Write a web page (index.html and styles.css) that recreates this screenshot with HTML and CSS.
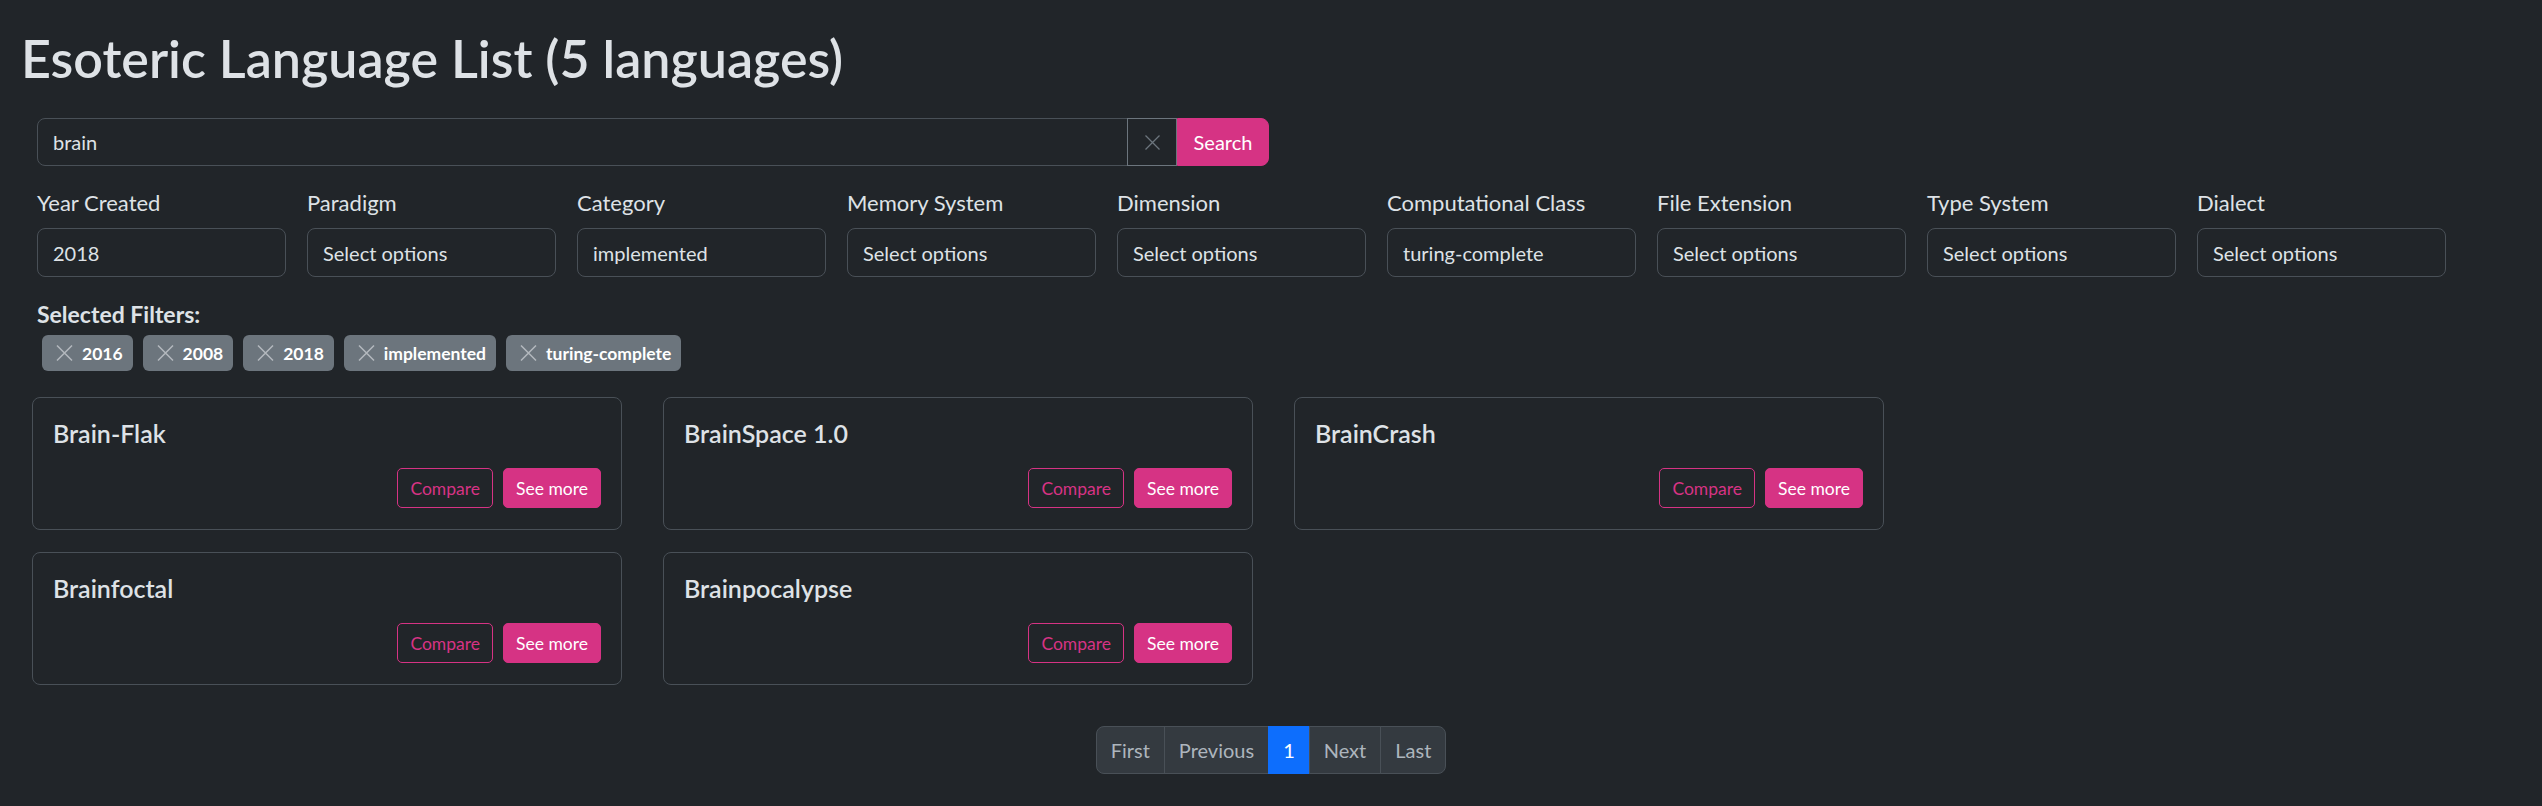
FILE: index.html
```html
<!DOCTYPE html>
<html lang="en">
<head>
<meta charset="utf-8">
<title>Esoteric Language List</title>
<link rel="stylesheet" href="styles.css">
</head>
<body>
<main class="page">
  <h1 class="title">Esoteric Language List (5 languages)</h1>

  <section class="controls">
    <form class="search">
      <input class="search-input" type="text" value="brain">
      <button class="clear-btn" type="button" aria-label="Clear">
        <svg width="15" height="15" viewBox="0 0 15 15"><path d="M0.5 0.5 L14.5 14.5 M14.5 0.5 L0.5 14.5" stroke="#6c757d" stroke-width="1.3" fill="none"/></svg>
      </button>
      <button class="search-btn" type="button">Search</button>
    </form>

    <div class="filters">
      <div class="filter"><label class="filter-label">Year Created</label><div class="select">2018</div></div>
      <div class="filter"><label class="filter-label">Paradigm</label><div class="select">Select options</div></div>
      <div class="filter"><label class="filter-label">Category</label><div class="select">implemented</div></div>
      <div class="filter"><label class="filter-label">Memory System</label><div class="select">Select options</div></div>
      <div class="filter"><label class="filter-label">Dimension</label><div class="select">Select options</div></div>
      <div class="filter"><label class="filter-label">Computational Class</label><div class="select">turing-complete</div></div>
      <div class="filter"><label class="filter-label">File Extension</label><div class="select">Select options</div></div>
      <div class="filter"><label class="filter-label">Type System</label><div class="select">Select options</div></div>
      <div class="filter"><label class="filter-label">Dialect</label><div class="select">Select options</div></div>
    </div>

    <div class="selected">
      <div class="selected-label">Selected Filters:</div>
      <div class="badges">
        <span class="badge"><svg class="badge-x" width="17" height="16" viewBox="0 0 17 16"><path d="M1 0.5 L16 15.5 M16 0.5 L1 15.5" stroke="#b3b8bd" stroke-width="1.5" fill="none"/></svg>2016</span>
        <span class="badge"><svg class="badge-x" width="17" height="16" viewBox="0 0 17 16"><path d="M1 0.5 L16 15.5 M16 0.5 L1 15.5" stroke="#b3b8bd" stroke-width="1.5" fill="none"/></svg>2008</span>
        <span class="badge"><svg class="badge-x" width="17" height="16" viewBox="0 0 17 16"><path d="M1 0.5 L16 15.5 M16 0.5 L1 15.5" stroke="#b3b8bd" stroke-width="1.5" fill="none"/></svg>2018</span>
        <span class="badge"><svg class="badge-x" width="17" height="16" viewBox="0 0 17 16"><path d="M1 0.5 L16 15.5 M16 0.5 L1 15.5" stroke="#b3b8bd" stroke-width="1.5" fill="none"/></svg>implemented</span>
        <span class="badge"><svg class="badge-x" width="17" height="16" viewBox="0 0 17 16"><path d="M1 0.5 L16 15.5 M16 0.5 L1 15.5" stroke="#b3b8bd" stroke-width="1.5" fill="none"/></svg>turing-complete</span>
      </div>
    </div>
  </section>

  <section class="cards">
    <article class="card">
      <h5 class="card-title">Brain-Flak</h5>
      <div class="card-actions"><button class="btn-compare" type="button">Compare</button><button class="btn-more" type="button">See more</button></div>
    </article>
    <article class="card">
      <h5 class="card-title">BrainSpace 1.0</h5>
      <div class="card-actions"><button class="btn-compare" type="button">Compare</button><button class="btn-more" type="button">See more</button></div>
    </article>
    <article class="card">
      <h5 class="card-title">BrainCrash</h5>
      <div class="card-actions"><button class="btn-compare" type="button">Compare</button><button class="btn-more" type="button">See more</button></div>
    </article>
    <article class="card">
      <h5 class="card-title">Brainfoctal</h5>
      <div class="card-actions"><button class="btn-compare" type="button">Compare</button><button class="btn-more" type="button">See more</button></div>
    </article>
    <article class="card">
      <h5 class="card-title">Brainpocalypse</h5>
      <div class="card-actions"><button class="btn-compare" type="button">Compare</button><button class="btn-more" type="button">See more</button></div>
    </article>
  </section>

  <nav class="pager">
    <span class="page-item first-item">First</span>
    <span class="page-item">Previous</span>
    <span class="page-item active">1</span>
    <span class="page-item">Next</span>
    <span class="page-item last-item">Last</span>
  </nav>
</main>
</body>
</html>
```

FILE: styles.css
```css
html {
  background: #212529;
}

body {
  margin: 0;
  background: #212529;
  color: #dee2e6;
  font-family: Lato, "Noto Sans", sans-serif;
  font-size: 20px;
  line-height: 1.5;
}

.page {
  padding: 27px 21px 20px;
}

.title {
  margin: 0 0 29px;
  font-size: 52px;
  font-weight: 600;
  line-height: 1.2;
  color: #dee2e6;
}

.controls {
  padding-left: 16px;
}

.search {
  display: flex;
  width: 1232px;
  height: 48px;
  margin: 0;
}

.search-input {
  flex: 1;
  min-width: 0;
  box-sizing: border-box;
  height: 48px;
  margin: 0;
  padding: 0 15px;
  background: #212529;
  color: #dee2e6;
  border: 1px solid #495057;
  border-radius: 8px 0 0 8px;
  font: inherit;
  outline: none;
}

.clear-btn {
  width: 50px;
  height: 48px;
  margin: 0 0 0 -1px;
  padding: 0;
  display: flex;
  align-items: center;
  justify-content: center;
  background: transparent;
  border: 1px solid #6c757d;
  border-radius: 0;
}

.search-btn {
  width: 92px;
  height: 48px;
  margin: 0;
  padding: 0;
  background: #d63384;
  color: #fff;
  border: 1px solid #d63384;
  border-radius: 0 8px 8px 0;
  font: inherit;
}

.filters {
  display: flex;
  gap: 21px;
  margin-top: 22px;
}

.filter {
  width: 249px;
}

.filter-label {
  display: block;
  margin-bottom: 10px;
  font-size: 22px;
  line-height: 30px;
}

.select {
  box-sizing: border-box;
  height: 49px;
  padding: 0 15px;
  display: flex;
  align-items: center;
  border: 1px solid #495057;
  border-radius: 8px;
  color: #dee2e6;
}

.selected {
  margin-top: 22px;
}

.selected-label {
  font-size: 23px;
  font-weight: 700;
  line-height: 30px;
}

.badges {
  display: flex;
  gap: 10px;
  margin: 6px 0 0 5px;
}

.badge {
  display: inline-flex;
  align-items: center;
  height: 36px;
  padding: 0 10px 0 14px;
  background: #6c757d;
  color: #fff;
  border-radius: 6px;
  font-size: 17.5px;
  font-weight: 700;
  line-height: 1;
}

.badge-x {
  margin-right: 9px;
}

.cards {
  display: grid;
  grid-template-columns: repeat(3, 590px);
  column-gap: 41px;
  row-gap: 22px;
  margin: 26px 0 0 11px;
}

.card {
  box-sizing: border-box;
  height: 133px;
  padding: 20px;
  border: 1px solid #495057;
  border-radius: 8px;
  background: #212529;
}

.card-title {
  margin: 0 0 20px;
  font-size: 25px;
  font-weight: 600;
  line-height: 1.2;
  color: #dee2e6;
}

.card-actions {
  display: flex;
  justify-content: flex-end;
  gap: 10px;
}

.btn-compare,
.btn-more {
  height: 40px;
  padding: 0 12px;
  font-family: inherit;
  font-size: 17.5px;
  border-radius: 5px;
  border: 1px solid #d63384;
}

.btn-compare {
  background: transparent;
  color: #d63384;
}

.btn-more {
  background: #d63384;
  color: #fff;
}

.pager {
  display: flex;
  justify-content: center;
  margin-top: 41px;
}

.page-item {
  box-sizing: border-box;
  height: 48px;
  padding: 0 14px;
  display: flex;
  align-items: center;
  background: #343a40;
  color: #adb5bd;
  border: 1px solid #495057;
  margin-left: -1px;
}

.page-item.first-item {
  margin-left: 0;
  border-radius: 8px 0 0 8px;
}

.page-item.last-item {
  border-radius: 0 8px 8px 0;
}

.page-item.active {
  background: #0d6efd;
  border-color: #0d6efd;
  color: #fff;
}
```
